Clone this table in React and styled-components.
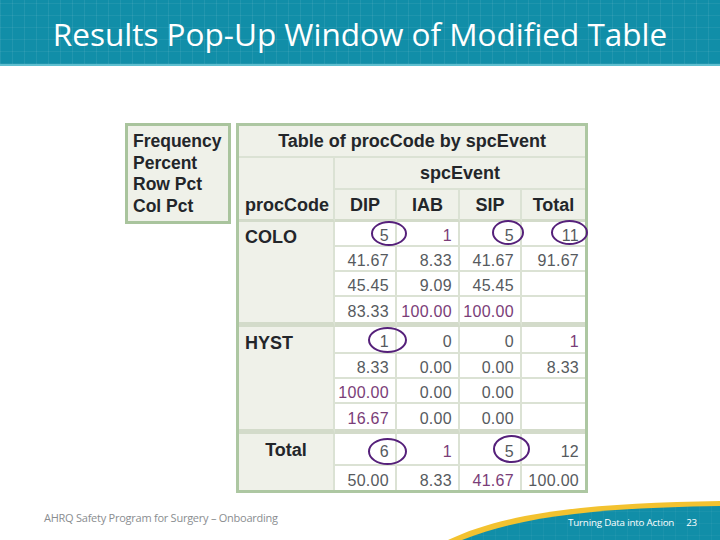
import React from "react";
import styled, { createGlobalStyle } from "styled-components";

const Global = createGlobalStyle`
  html, body { margin: 0; padding: 0; background: #ffffff; }
  body { font-family: "Liberation Sans", Arial, sans-serif; }
`;

const Page = styled.div`
  width: 720px;
  height: 540px;
  overflow: hidden;
  background: #ffffff;
  display: flex;
  flex-direction: column;
`;

const Header = styled.header`
  height: 64px;
  flex: none;
  border-bottom: 2px solid #5fbfd0;
  background-color: #118ea8;
  background-image:
    repeating-linear-gradient(90deg, rgba(255,255,255,0.07) 0 1px, transparent 1px 12px),
    repeating-linear-gradient(0deg, rgba(255,255,255,0.06) 0 1px, transparent 1px 12px);
  display: flex;
  align-items: center;
  justify-content: center;
`;

const Title = styled.h1`
  margin: 3px 0 0 0;
  font-family: "Open Sans", "Noto Sans", sans-serif;
  font-weight: 400;
  font-size: 31.5px;
  letter-spacing: 0;
  color: #ffffff;
`;

const Main = styled.main`
  flex: 1;
  display: flex;
  align-items: flex-start;
  gap: 5px;
  padding: 57px 0 0 125px;
`;

const Legend = styled.div`
  width: 95px;
  height: 90px;
  box-sizing: content-box;
  border: 3px solid #a9c49d;
  background: #eff1e9;
  padding: 5px 0 0 5px;
  display: flex;
  flex-direction: column;
`;

const LegendItem = styled.div`
  font-weight: 700;
  font-size: 17.5px;
  line-height: 21.6px;
  color: #23262a;
`;

const Table = styled.table`
  border-collapse: separate;
  border-spacing: 0;
  table-layout: fixed;
  width: 352px;
  border: 3px solid #adc7a2;
  font-family: "Liberation Sans", Arial, sans-serif;
`;

const Col = styled.col`
  width: ${(p) => p.$w}px;
`;

const Row = styled.tr`
  height: ${(p) => p.$h}px;
`;

const line = "#dbe2d4";
const sep = "#d3dbca";

const HeadCell = styled.th`
  box-sizing: border-box;
  background: #eff1e9;
  border-right: ${(p) => (p.$last ? 0 : 2)}px solid ${line};
  border-bottom: ${(p) => p.$bb || 2}px solid ${(p) => (p.$bb > 2 ? sep : line)};
  font-weight: 700;
  font-size: 18px;
  line-height: 20px;
  color: #23262a;
  text-align: ${(p) => (p.$left ? "left" : "center")};
  vertical-align: ${(p) => (p.$left ? "bottom" : "middle")};
  padding: ${(p) => (p.$left ? "0 0 4px 6px" : "0")};
`;

const RowHead = styled.th`
  box-sizing: border-box;
  background: #eff1e9;
  border-right: 2px solid ${line};
  border-bottom: ${(p) => p.$bb}px solid ${sep};
  font-weight: 700;
  font-size: 18px;
  line-height: 20px;
  color: #23262a;
  text-align: ${(p) => (p.$center ? "center" : "left")};
  vertical-align: top;
  padding: ${(p) => p.$pt}px 0 0 ${(p) => (p.$center ? 0 : 6)}px;
`;

const Cell = styled.td`
  position: relative;
  box-sizing: border-box;
  background: #ffffff;
  border-right: ${(p) => (p.$last ? 0 : 2)}px solid ${line};
  border-bottom: ${(p) => p.$bb}px solid ${(p) => (p.$bb > 2 ? sep : line)};
  font-size: 16px;
  line-height: 18px;
  letter-spacing: 0.3px;
  color: ${(p) => (p.$purple ? "#7a3d78" : "#565a5e")};
  text-align: right;
  vertical-align: middle;
  padding: 5px 6px 0 0;
`;

const Ring = styled.span`
  position: absolute;
  z-index: 2;
  top: 50%;
  right: ${(p) => p.$r}px;
  width: ${(p) => p.$w}px;
  height: ${(p) => p.$h}px;
  margin-top: ${(p) => p.$dy - p.$h / 2}px;
  border: 2.5px solid #55207a;
  border-radius: 50%;
  box-sizing: border-box;
  pointer-events: none;
`;

const Footer = styled.footer`
  position: relative;
  height: 40px;
  flex: none;
  display: flex;
  align-items: center;
  justify-content: space-between;
  font-family: "Open Sans", "Noto Sans", sans-serif;
`;

const FootLeft = styled.span`
  margin-left: 44px;
  margin-top: -6px;
  font-size: 11px;
  letter-spacing: -0.25px;
  color: #8a8d90;
`;

const FootRight = styled.span`
  position: relative;
  z-index: 1;
  margin-right: 23px;
  margin-top: 4px;
  font-size: 9.8px;
  letter-spacing: -0.2px;
  color: #ffffff;
  display: flex;
  gap: 12px;
`;

const Swoosh = styled.svg`
  position: absolute;
  right: 0;
  bottom: 0;
  width: 272px;
  height: 40px;
`;

const groups = [
  {
    label: "COLO",
    pt: 5,
    rows: [
      ["5", "1", "5", "11"],
      ["41.67", "8.33", "41.67", "91.67"],
      ["45.45", "9.09", "45.45", ""],
      ["83.33", "100.00", "100.00", ""],
    ],
    heights: [25, 25, 24, 30],
    last: 5,
    purple: ["0-1", "3-1", "3-2"],
    rings: {
      0: { r: -12, w: 36, h: 25, dy: 0 },
      2: { r: -4, w: 32, h: 25, dy: -1 },
      3: { r: -3, w: 37, h: 25, dy: -1 },
    },
  },
  {
    label: "HYST",
    pt: 6,
    rows: [
      ["1", "0", "0", "1"],
      ["8.33", "0.00", "0.00", "8.33"],
      ["100.00", "0.00", "0.00", ""],
      ["16.67", "0.00", "0.00", ""],
    ],
    heights: [27, 24, 25, 30],
    last: 5,
    purple: ["0-3", "2-0", "3-0"],
    rings: { 0: { r: -12, w: 39, h: 26, dy: 0 } },
  },
  {
    label: "Total",
    center: true,
    pt: 6,
    rows: [
      ["6", "1", "5", "12"],
      ["50.00", "8.33", "41.67", "100.00"],
    ],
    heights: [32, 24],
    last: 0,
    purple: ["0-1", "1-2"],
    rings: {
      0: { r: -12, w: 39, h: 27, dy: 2 },
      2: { r: -10, w: 37, h: 28, dy: 0 },
    },
  },
];

export default function App() {
  return (
    <Page>
      <Global />
      <Header>
        <Title>Results Pop-Up Window of Modified Table</Title>
      </Header>
      <Main>
        <Legend>
          <LegendItem>Frequency</LegendItem>
          <LegendItem>Percent</LegendItem>
          <LegendItem>Row Pct</LegendItem>
          <LegendItem>Col Pct</LegendItem>
        </Legend>
        <Table>
          <colgroup>
            <Col $w={96} />
            <Col $w={62} />
            <Col $w={63} />
            <Col $w={62} />
            <Col $w={63} />
          </colgroup>
          <thead>
            <Row $h={32}>
              <HeadCell colSpan={5} $last>Table of procCode by spcEvent</HeadCell>
            </Row>
            <Row $h={32}>
              <HeadCell rowSpan={2} $left $bb={3}>procCode</HeadCell>
              <HeadCell colSpan={4} $last>spcEvent</HeadCell>
            </Row>
            <Row $h={32}>
              <HeadCell $bb={3}>DIP</HeadCell>
              <HeadCell $bb={3}>IAB</HeadCell>
              <HeadCell $bb={3}>SIP</HeadCell>
              <HeadCell $bb={3} $last>Total</HeadCell>
            </Row>
          </thead>
          {groups.map((g) => (
            <tbody key={g.label}>
              {g.rows.map((r, ri) => {
                const isLast = ri === g.rows.length - 1;
                const bb = isLast ? g.last : 2;
                return (
                  <Row key={ri} $h={g.heights[ri]}>
                    {ri === 0 && (
                      <RowHead rowSpan={g.rows.length} $center={g.center} $pt={g.pt} $bb={g.last}>
                        {g.label}
                      </RowHead>
                    )}
                    {r.map((v, ci) => {
                      const ring = ri === 0 ? g.rings[ci] : null;
                      return (
                        <Cell
                          key={ci}
                          $bb={bb}
                          $last={ci === 3}
                          $purple={g.purple.includes(`${ri}-${ci}`)}
                        >
                          {v}
                          {ring && <Ring $r={ring.r} $w={ring.w} $h={ring.h} $dy={ring.dy} />}
                        </Cell>
                      );
                    })}
                  </Row>
                );
              })}
            </tbody>
          ))}
        </Table>
      </Main>
      <Footer>
        <Swoosh viewBox="0 0 272 40" preserveAspectRatio="none">
          <defs>
            <pattern id="grid" width="12" height="12" patternUnits="userSpaceOnUse">
              <path d="M12 0 V12 M0 12 H12" stroke="rgba(255,255,255,0.08)" strokeWidth="1" fill="none" />
            </pattern>
          </defs>
          <path d="M0 40 C 60 11 150 3 272 1 L 272 40 Z" fill="#f3c22f" />
          <path d="M14 40 C 80 14 160 8 272 6 L 272 40 Z" fill="#118ea8" />
          <path d="M14 40 C 80 14 160 8 272 6 L 272 40 Z" fill="url(#grid)" />
        </Swoosh>
        <FootLeft>AHRQ Safety Program for Surgery – Onboarding</FootLeft>
        <FootRight>
          <span>Turning Data into Action</span>
          <span>23</span>
        </FootRight>
      </Footer>
    </Page>
  );
}
